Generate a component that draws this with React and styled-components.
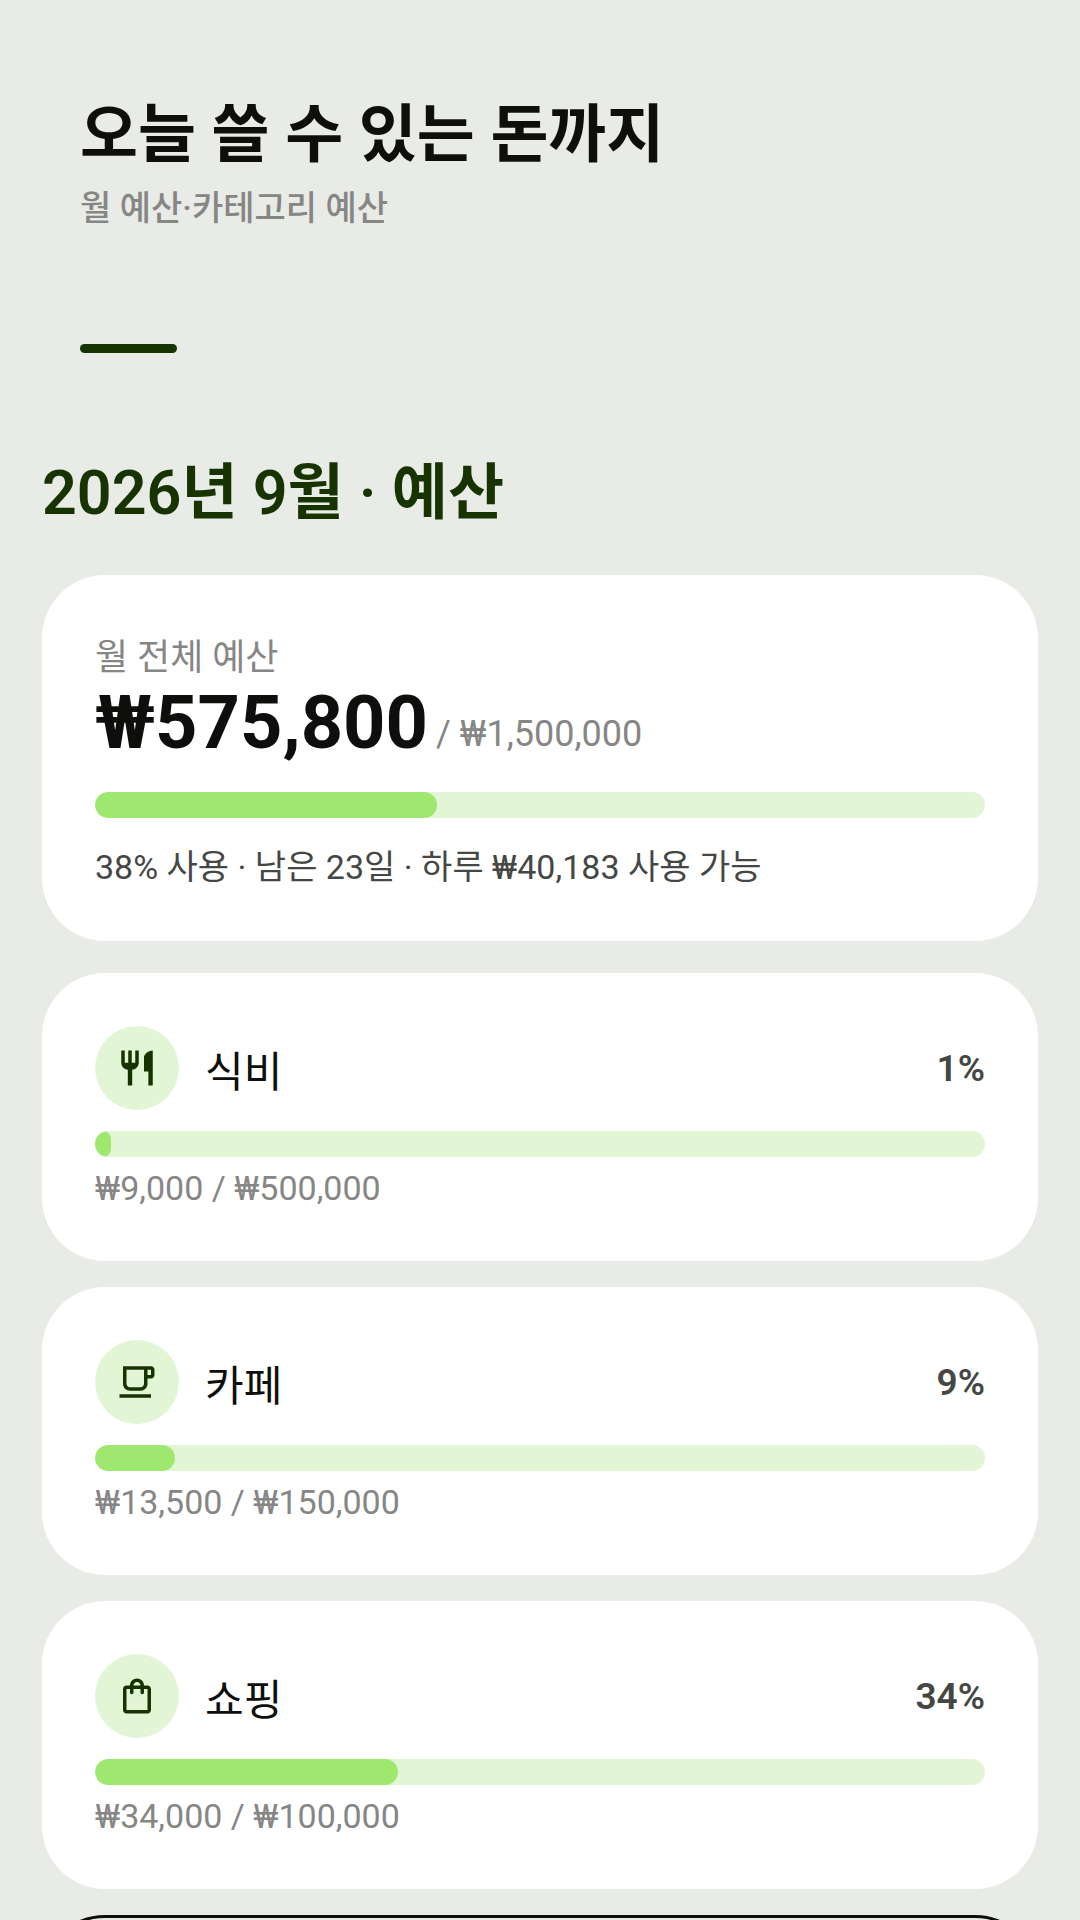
import React from "react"
import styled, { createGlobalStyle } from "styled-components"
import { MdRestaurant, MdOutlineLocalCafe, MdOutlineShoppingBag } from "react-icons/md"

const GlobalStyle = createGlobalStyle`
  * {
    box-sizing: border-box;
  }

  body {
    margin: 0;
    background: #e8ebe6;
    color: #0e0f0c;
    font-family: Roboto, "Noto Sans CJK KR", sans-serif;
  }
`

const Page = styled.div`
  display: flex;
  flex-direction: column;
  min-height: 100vh;
  padding: 95px 42px 0;
`

const Header = styled.header`
  padding: 0 38px;
`

const Title = styled.h1`
  margin: 0;
  font-size: 63px;
  font-weight: 600;
  line-height: 80px;
`

const Subtitle = styled.p`
  margin: 9px 0 0;
  color: #868685;
  font-size: 34px;
  font-weight: 500;
  line-height: 48px;
`

const Accent = styled.div`
  width: 97px;
  height: 9px;
  margin-top: 112px;
  border-radius: 5px;
  background: #163300;
`

const Month = styled.h2`
  margin: 98px 0 0;
  color: #163300;
  font-size: 61px;
  font-weight: 600;
  line-height: 84px;
`

const Card = styled.section`
  padding: 53px;
  border-radius: 63px;
  background: #fff;
`

const Overall = styled(Card)`
  margin-top: 40px;
`

const List = styled.div`
  display: flex;
  flex-direction: column;
  gap: 26px;
  margin-top: 32px;
`

const Label = styled.div`
  color: #868685;
  font-size: 36px;
  line-height: 60px;
`

const Amount = styled.div`
  display: flex;
  align-items: flex-end;
  gap: 8px;
  margin-bottom: 34px;
`

const Spent = styled.strong`
  font-size: 74px;
  font-weight: 700;
  line-height: 70px;
`

const Limit = styled.span`
  color: #868685;
  font-size: 36px;
  line-height: 48px;
`

const Track = styled.div`
  height: 26px;
  overflow: hidden;
  border-radius: 13px;
  background: #e2f6d5;
`

const Fill = styled.div`
  height: 100%;
  border-radius: 13px;
  background: #9fe870;
`

const Note = styled.p`
  margin: 28px 0 0;
  color: #454745;
  font-size: 34px;
  line-height: 42px;
`

const Row = styled.div`
  display: flex;
  align-items: center;
  gap: 26px;
  margin-bottom: 21px;
`

const Icon = styled.span`
  display: flex;
  align-items: center;
  justify-content: center;
  width: 84px;
  height: 84px;
  border-radius: 50%;
  background: #e2f6d5;
  color: #163300;
  font-size: 42px;
`

const Name = styled.h3`
  flex: 1;
  margin: 0;
  padding-top: 8px;
  font-size: 42px;
  font-weight: 400;
  line-height: 63px;
`

const Percent = styled.span`
  color: #454745;
  font-size: 37px;
  font-weight: 600;
`

const Detail = styled.p`
  margin: 12px 0 0;
  color: #868685;
  font-size: 34px;
  line-height: 39px;
`

const AddButton = styled.button`
  height: 126px;
  margin-top: 26px;
  border: 3px solid #0e0f0c;
  border-radius: 63px;
  background: transparent;
`

const won = value => `₩${value.toLocaleString("en-US")}`

const percent = (spent, limit) => Math.floor((spent / limit) * 100)

const Bar = ({ label, spent, limit }) => (
  <Track
    role="progressbar"
    aria-label={label}
    aria-valuenow={percent(spent, limit)}
    aria-valuemin={0}
    aria-valuemax={100}
  >
    <Fill style={{ width: `${(spent / limit) * 100}%` }} />
  </Track>
)

const categories = [
  { name: "식비", icon: MdRestaurant, spent: 9000, limit: 500000 },
  { name: "카페", icon: MdOutlineLocalCafe, spent: 13500, limit: 150000 },
  { name: "쇼핑", icon: MdOutlineShoppingBag, spent: 34000, limit: 100000 },
]

const Category = ({ name, icon: Glyph, spent, limit }) => (
  <Card>
    <Row>
      <Icon>
        <Glyph />
      </Icon>
      <Name>{name}</Name>
      <Percent>{percent(spent, limit)}%</Percent>
    </Row>
    <Bar label={name} spent={spent} limit={limit} />
    <Detail>
      {won(spent)} / {won(limit)}
    </Detail>
  </Card>
)

export default () => (
  <>
    <GlobalStyle />
    <Page>
      <Header>
        <Title>오늘 쓸 수 있는 돈까지</Title>
        <Subtitle>월 예산·카테고리 예산</Subtitle>
        <Accent />
      </Header>
      <Month>2026년 9월 · 예산</Month>
      <Overall>
        <Label>월 전체 예산</Label>
        <Amount>
          <Spent>{won(575800)}</Spent>
          <Limit>/ {won(1500000)}</Limit>
        </Amount>
        <Bar label="월 전체 예산" spent={575800} limit={1500000} />
        <Note>38% 사용 · 남은 23일 · 하루 {won(40183)} 사용 가능</Note>
      </Overall>
      <List>
        {categories.map(category => (
          <Category key={category.name} {...category} />
        ))}
      </List>
      <AddButton type="button" aria-label="예산 추가" />
    </Page>
  </>
)
